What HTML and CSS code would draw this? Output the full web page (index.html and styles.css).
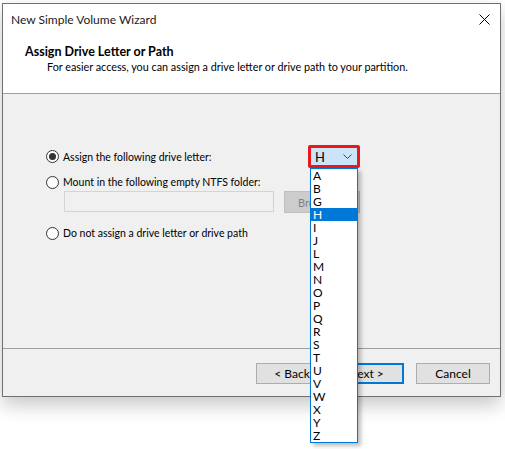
FILE: index.html
```html
<!DOCTYPE html>
<html lang="en">
<head>
    <meta charset="UTF-8">
    <meta name="viewport" content="width=device-width, initial-scale=1.0">
    <title>New Simple Volume Wizard</title>
    <link rel="stylesheet" href="styles.css">
</head>
<body>
    <div class="window">
        <div class="titlebar">
            <span>New Simple Volume Wizard</span>
            <svg class="close" width="11" height="11" viewBox="0 0 11 11">
                <path d="M0.5 0.5 L10.5 10.5 M10.5 0.5 L0.5 10.5" stroke="#000" stroke-width="1" fill="none"/>
            </svg>
        </div>

        <div class="header">
            <h1>Assign Drive Letter or Path</h1>
            <p>For easier access, you can assign a drive letter or drive path to your partition.</p>
        </div>

        <div class="content">
            <div class="options">
                <div class="row">
                    <label class="radio"><span class="dot checked"></span>Assign the following drive letter:</label>
                    <div class="combo">
                        <span>H</span>
                        <svg width="9" height="5" viewBox="0 0 9 5">
                            <path d="M0.5 0.5 L4.5 4.5 L8.5 0.5" stroke="#444" stroke-width="1" fill="none"/>
                        </svg>
                        <ul class="droplist">
                            <li>A</li>
                            <li>B</li>
                            <li>G</li>
                            <li class="selected">H</li>
                            <li>I</li>
                            <li>J</li>
                            <li>L</li>
                            <li>M</li>
                            <li>N</li>
                            <li>O</li>
                            <li>P</li>
                            <li>Q</li>
                            <li>R</li>
                            <li>S</li>
                            <li>T</li>
                            <li>U</li>
                            <li>V</li>
                            <li>W</li>
                            <li>X</li>
                            <li>Y</li>
                            <li>Z</li>
                        </ul>
                    </div>
                </div>

                <label class="radio second"><span class="dot"></span>Mount in the following empty NTFS folder:</label>

                <div class="folder">
                    <div class="field"></div>
                    <button class="browse" disabled>Browse...</button>
                </div>

                <label class="radio third"><span class="dot"></span>Do not assign a drive letter or drive path</label>
            </div>
        </div>

        <div class="footer">
            <button class="btn">&lt; Back</button>
            <button class="btn default">Next &gt;</button>
            <button class="btn cancel">Cancel</button>
        </div>
    </div>
</body>
</html>
```

FILE: styles.css
```css
* {
    margin: 0;
    padding: 0;
    box-sizing: border-box;
}

html, body {
    min-height: 449px;
}

body {
    font-family: Lato, "Noto Sans", Arial, sans-serif;
    font-size: 11px;
    color: #000;
    background: #fff;
    padding: 3px 0 0 2px;
}

.window {
    width: 499px;
    height: 394px;
    border: 1px solid #707070;
    background: #f0f0f0;
    box-shadow: 0 8px 18px rgba(0, 0, 0, 0.22);
    display: flex;
    flex-direction: column;
}

.titlebar {
    height: 31px;
    background: #fff;
    display: flex;
    align-items: center;
    justify-content: space-between;
    padding: 0 10px 0 8px;
    color: #1a1a1a;
    font-size: 12px;
}

.close {
    display: block;
}

.header {
    height: 59px;
    background: #fff;
    border-bottom: 1px solid #a0a0a0;
    padding-top: 9px;
}

.header h1 {
    font-size: 12.5px;
    font-weight: bold;
    line-height: 15px;
    padding-left: 22px;
}

.header p {
    font-size: 10.8px;
    line-height: 15px;
    padding-left: 44px;
}

.content {
    height: 255px;
    border-bottom: 1px solid #a0a0a0;
    padding: 51px 0 0 43px;
}

.options {
    width: 314px;
    font-size: 10.5px;
}

.row {
    display: flex;
    align-items: center;
    justify-content: space-between;
    height: 23px;
}

.radio {
    display: flex;
    align-items: center;
    height: 16px;
    line-height: 16px;
}

.radio.second {
    margin-top: 6px;
}

.radio.third {
    margin-top: 12px;
}

.dot {
    width: 13px;
    height: 13px;
    border: 1px solid #333;
    border-radius: 50%;
    background: #fff;
    margin-right: 4px;
    display: flex;
    align-items: center;
    justify-content: center;
}

.dot.checked::after {
    content: "";
    width: 7px;
    height: 7px;
    border-radius: 50%;
    background: #333;
}

.folder {
    display: flex;
    justify-content: space-between;
    margin-top: 1px;
    padding-left: 18px;
}

.field {
    width: 210px;
    height: 21px;
    border: 1px solid #d4d4d4;
    background: #f0f0f0;
}

.browse {
    width: 76px;
    height: 22px;
    border: 1px solid #bfbfbf;
    background: #cccccc;
    color: #838383;
    font: inherit;
    font-size: 11px;
    text-align: left;
    padding-left: 13px;
}

.combo {
    position: relative;
    width: 52px;
    height: 23px;
    border: 3px solid #e8191b;
    border-radius: 2px;
    background: #cce4f7;
    display: flex;
    align-items: center;
    justify-content: space-between;
    padding: 0 5px 0 4px;
    font-size: 13px;
}

.droplist {
    position: absolute;
    top: 20px;
    left: -1px;
    width: 48px;
    list-style: none;
    background: #fff;
    border: 1px solid #0078d7;
    box-shadow: 3px 3px 4px rgba(0, 0, 0, 0.25);
    z-index: 2;
}

.droplist li {
    height: 13px;
    line-height: 13px;
    padding-left: 2px;
    font-size: 12px;
}

.droplist li.selected {
    background: #0078d7;
    color: #fff;
}

.footer {
    flex: 1;
    display: flex;
    justify-content: flex-end;
    padding: 14px 10px 0 0;
}

.btn {
    width: 72px;
    height: 21px;
    border: 1px solid #adadad;
    background: #e1e1e1;
    font: inherit;
    font-size: 12px;
    color: #000;
}

.btn.default {
    width: 76px;
    border: 2px solid #0078d7;
}

.btn.cancel {
    width: 74px;
    margin-left: 12px;
}
```
